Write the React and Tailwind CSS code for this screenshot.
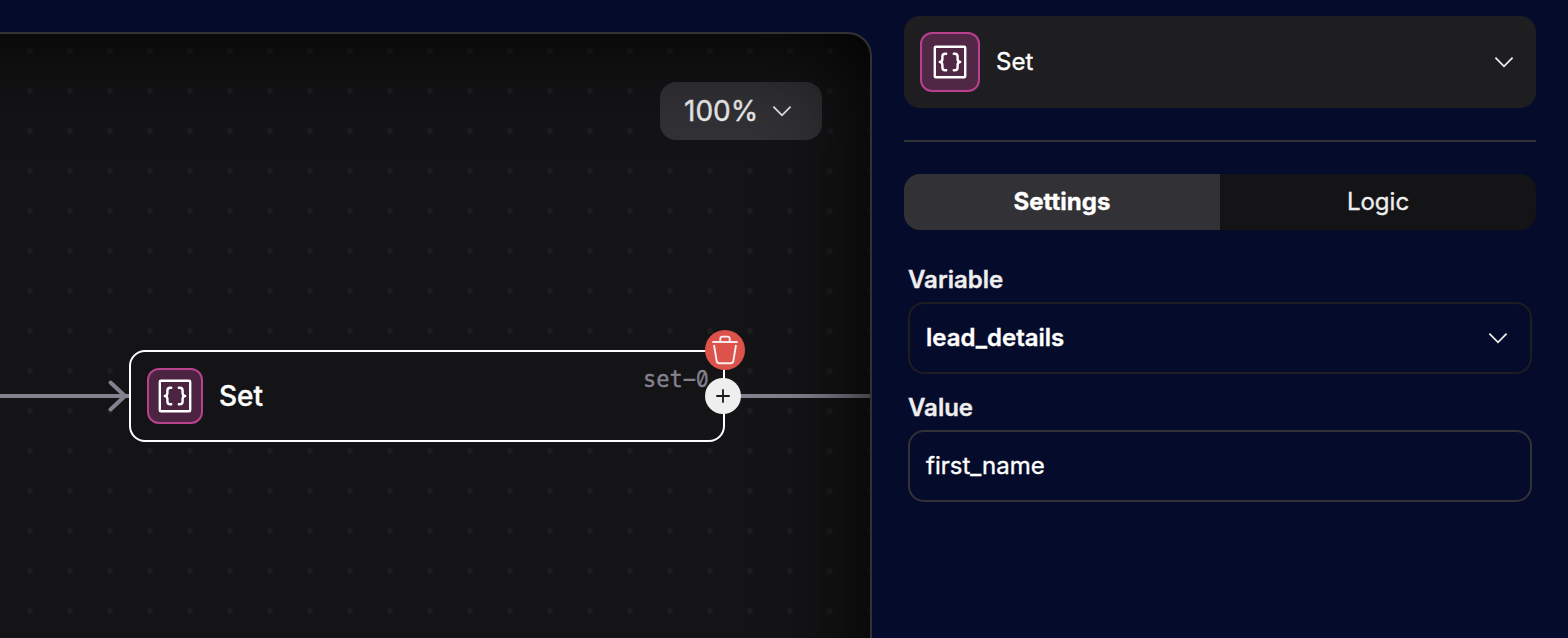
import React from "react";

function BracesIcon({ className }) {
  return (
    <svg className={className} viewBox="0 0 34 34" fill="none" stroke="#fff" strokeLinecap="round" strokeLinejoin="round">
      <rect x="1.8" y="1.8" width="30.4" height="30.4" rx="1" strokeWidth="2.4" />
      <path d="M13.2 8.7H12.2C10.3 8.7 9.4 9.7 9.4 11.5V14C9.4 15.8 8.5 16.9 6.8 17C8.5 17.1 9.4 18.2 9.4 20V22.5C9.4 24.3 10.3 25.3 12.2 25.3H13.2" strokeWidth="2.4" />
      <path d="M20.8 8.7H21.8C23.7 8.7 24.6 9.7 24.6 11.5V14C24.6 15.8 25.5 16.9 27.2 17C25.5 17.1 24.6 18.2 24.6 20V22.5C24.6 24.3 23.7 25.3 21.8 25.3H20.8" strokeWidth="2.4" />
    </svg>
  );
}

function Chevron() {
  return (
    <svg className="h-6 w-6 shrink-0" viewBox="0 0 24 24" fill="none" stroke="#eeeeee" strokeWidth="1.8">
      <path d="M3.4 7.7L12 16.3L20.6 7.7" />
    </svg>
  );
}

function TrashIcon() {
  return (
    <svg className="h-10 w-10" viewBox="0 0 40 40" fill="none" stroke="#f6f0f0" strokeWidth="1.9">
      <path d="M7.3 12H32.7" />
      <path d="M15.3 11.5V8.8C15.3 7.4 16.2 6.6 17.5 6.6H22.5C23.8 6.6 24.7 7.4 24.7 8.8V11.5" />
      <path d="M9 15L11.6 30.7C11.8 32.5 12.8 33.2 14.4 33.2H25.6C27.2 33.2 28.2 32.5 28.4 30.7L31 15" />
    </svg>
  );
}

function Canvas() {
  return (
    <section className="relative mt-8 h-[606px] w-[872px] shrink-0 overflow-hidden rounded-tr-[24px] border-t-2 border-r-2 border-[#323135] bg-[#141416]">
      <svg className="absolute inset-0 h-full w-full">
        <defs>
          <pattern id="dots" x="10" y="-3" width="40" height="40" patternUnits="userSpaceOnUse">
            <circle cx="20" cy="20" r="3" fill="#1e1e20" />
          </pattern>
        </defs>
        <rect width="100%" height="100%" fill="url(#dots)" />
        <g fill="none" stroke="#84828e" strokeWidth="4">
          <path d="M0 362H129" />
          <path d="M110.5 348.5L125 362L110.5 375.5" strokeLinecap="round" />
          <path d="M724 362H872" />
        </g>
      </svg>

      <div className="absolute left-[129px] top-[316px] flex h-[92px] w-[596px] items-center gap-4 rounded-2xl border-2 border-white bg-[#141416] pl-4">
        <div className="flex h-14 w-14 items-center justify-center rounded-[12px] border-2 border-[#b8408f] bg-[#4a2440]">
          <BracesIcon className="h-[34px] w-[34px]" />
        </div>
        <span className="text-[28px] font-medium leading-9 text-white">Set</span>
      </div>
      <div className="absolute left-[643px] top-[332px] flex origin-bottom scale-y-105 items-baseline font-['DejaVu_Sans_Mono',monospace] text-[22px] leading-[26px] text-[#84828e]">
        set−
        <span className="inline-block origin-left scale-x-90 font-['Inter',sans-serif] [font-feature-settings:'zero']">0</span>
      </div>
      <button className="absolute left-[705px] top-[296px] flex h-10 w-10 items-center justify-center rounded-full bg-[#de524c]">
        <TrashIcon />
      </button>
      <button className="absolute left-[705px] top-[344px] flex h-9 w-9 items-center justify-center rounded-full bg-[#eeeeee]">
        <svg className="h-4 w-4" viewBox="0 0 16 16" stroke="#19191b" strokeWidth="1.8">
          <path d="M1.3 8H14.7M8 1.3V14.7" />
        </svg>
      </button>
      <button className="absolute left-[660px] top-12 flex h-[58px] w-[162px] items-center justify-between rounded-2xl bg-[#323135] pl-6 pr-7">
        <span className="text-[28px] leading-9 text-[#eeeeee]">100%</span>
        <Chevron />
      </button>
      <div className="pointer-events-none absolute -bottom-40 -left-40 right-0 top-0 rounded-tr-[22px] shadow-[inset_0_0_100px_#000]" />
    </section>
  );
}

function Sidebar() {
  return (
    <aside className="flex flex-1 flex-col px-8 pt-4 text-2xl text-white">
      <div className="flex h-[92px] items-center gap-4 rounded-2xl bg-[#1e1e20] pl-4 pr-5">
        <div className="flex h-[60px] w-[60px] items-center justify-center rounded-[12px] border-2 border-[#b8408f] bg-[#502845]">
          <BracesIcon className="h-[34px] w-[34px]" />
        </div>
        <span className="flex-1">Set</span>
        <Chevron />
      </div>
      <div className="mt-8 h-0.5 bg-[#323135]" />
      <div className="mt-8 grid h-14 grid-cols-2 overflow-hidden rounded-2xl bg-[#141416]">
        <button className="bg-[#323135] font-bold">Settings</button>
        <button className="text-[#eeeeee]">Logic</button>
      </div>
      <div className="flex flex-col px-1 pt-[34px]">
        <label className="font-semibold text-[#eeeeee]">Variable</label>
        <div className="mt-1.5 flex h-[72px] items-center justify-between rounded-2xl border-2 border-[#1e1e20] pl-4 pr-5">
          <span className="font-semibold">lead_details</span>
          <Chevron />
        </div>
        <label className="mt-[18px] font-semibold text-[#eeeeee]">Value</label>
        <div className="mt-1.5 flex h-[72px] items-center rounded-2xl border-2 border-[#323135] px-4">
          first_name
        </div>
      </div>
    </aside>
  );
}

export default function App() {
  return (
    <main className="flex h-[638px] w-[1568px] overflow-hidden bg-[#050b2a] font-['Inter',sans-serif] [-webkit-text-stroke:0.35px]">
      <Canvas />
      <Sidebar />
    </main>
  );
}
